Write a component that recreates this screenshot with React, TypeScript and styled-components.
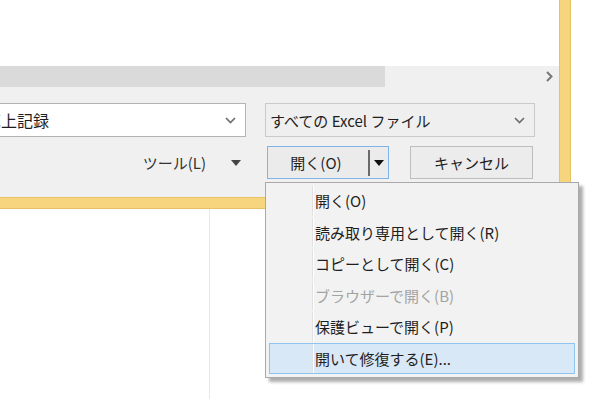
import React from 'react';
import styled, { createGlobalStyle } from 'styled-components';

const GlobalStyle = createGlobalStyle`
    body {
        margin: 0;
        background: #ffffff;
        font-family: "Noto Sans CJK JP", "Noto Sans", sans-serif;
        color: #1e1e1e;
    }
`;

interface ComboProps {
    editable?: boolean;
    width: number;
}

interface MenuItemProps {
    disabled?: boolean;
    active?: boolean;
}

const StyledPage = styled.div`
    position: relative;
    width: 600px;
    height: 400px;
    overflow: hidden;
    background: #ffffff;
`;

const StyledFrameEdge = styled.div`
    width: 571px;
    box-sizing: border-box;
    border-right: 1px solid #e8c266;
    border-bottom: 1px solid #e8c266;
`;

const StyledFrameBand = styled.div`
    border-right: 10px solid #f7d57f;
    border-bottom: 10px solid #f7d57f;
`;

const StyledDialog = styled.div`
    display: flex;
    flex-direction: column;
    height: 197px;
    background: #f0f0f0;
    border-right: 1px solid #e8c266;
    border-bottom: 1px solid #e8c266;
`;

const StyledFileArea = styled.div`
    height: 66px;
    background: #ffffff;
`;

const StyledScrollBar = styled.div`
    display: flex;
    align-items: center;
    height: 21px;
    background: #f0f0f0;
`;

const StyledThumb = styled.div`
    width: 385px;
    height: 100%;
    background: #dadada;
`;

const StyledScrollArrow = styled.svg`
    margin-left: auto;
    margin-right: 6px;
`;

const StyledControls = styled.div`
    display: flex;
    flex-direction: column;
    padding-top: 16px;
    gap: 9px;
`;

const StyledRow = styled.div<{ right: number }>`
    display: flex;
    align-items: center;
    justify-content: flex-end;
    padding-right: ${(p) => p.right}px;
`;

const StyledCombo = styled.div<ComboProps>`
    display: flex;
    align-items: center;
    justify-content: space-between;
    flex-shrink: 0;
    box-sizing: border-box;
    width: ${(p) => p.width}px;
    height: 34px;
    padding: 0 9px 0 4px;
    border: 1px solid ${(p) => (p.editable ? '#b4b4b4' : '#cacaca')};
    background: ${(p) => (p.editable ? '#ffffff' : '#efefef')};
    font-size: 15px;
    line-height: 1;
    white-space: nowrap;
`;

const StyledComboText = styled.span<{ size: number }>`
    font-size: ${(p) => p.size}px;
`;

const StyledTools = styled.div`
    display: flex;
    align-items: center;
    gap: 25px;
    margin-right: 26px;
    font-size: 15px;
    line-height: 1;
    color: #333333;
`;

const StyledSplitButton = styled.div`
    display: flex;
    align-items: center;
    box-sizing: border-box;
    width: 122px;
    height: 33px;
    margin-right: 21px;
    border: 1px solid #7db5e8;
    background: #ebebeb;
    font-size: 15px;
    line-height: 1;
`;

const StyledSplitLabel = styled.span`
    flex: 1;
    text-align: center;
    padding-right: 4px;
`;

const StyledSplitDivider = styled.span`
    width: 2px;
    height: 26px;
    background: #6a6a6a;
`;

const StyledSplitArrow = styled.span`
    display: flex;
    justify-content: center;
    width: 18px;
`;

const StyledButton = styled.div`
    display: flex;
    align-items: center;
    justify-content: center;
    box-sizing: border-box;
    width: 123px;
    height: 33px;
    border: 1px solid #bdbdbd;
    background: #ececec;
    font-size: 15px;
    line-height: 1;
`;

const StyledBelow = styled.div`
    display: flex;
    height: 190px;
`;

const StyledColumn = styled.div`
    width: 209px;
    border-right: 1px solid #e7e7e7;
`;

const StyledMenu = styled.div`
    position: absolute;
    left: 265px;
    top: 182px;
    width: 314px;
    box-sizing: border-box;
    padding: 2px 3px 3px;
    border: 1px solid #a9a9a9;
    background: #f2f2f2;
    box-shadow: 4px 4px 3px rgba(0, 0, 0, 0.32);

    ::before {
        content: '';
        position: absolute;
        left: 42px;
        top: 0;
        bottom: 0;
        width: 1px;
        background: #e1e1e1;
        border-right: 1px solid #ffffff;
    }
`;

const StyledMenuItem = styled.div<MenuItemProps>`
    position: relative;
    display: flex;
    align-items: center;
    box-sizing: border-box;
    height: 31.5px;
    padding-left: 45px;
    border: 1px solid ${(p) => (p.active ? '#8fc3f0' : 'transparent')};
    background: ${(p) => (p.active ? '#d9e8f7' : 'transparent')};
    color: ${(p) => (p.disabled ? '#a3a3a3' : '#1e1e1e')};
    font-size: 15px;
    line-height: 1;
    white-space: nowrap;
`;

const Chevron = () => (
    <svg width="11" height="7" viewBox="0 0 11 7">
        <polyline points="1,1 5.5,5.5 10,1" fill="none" stroke="#6e6e6e" strokeWidth="1.7" />
    </svg>
);

const DownTriangle = ({ color }: { color: string }) => (
    <svg width="10" height="6" viewBox="0 0 10 6">
        <polygon points="0,0 10,0 5,6" fill={color} />
    </svg>
);

const menuItems: { label: string; disabled?: boolean; active?: boolean }[] = [
    { label: '開く(O)' },
    { label: '読み取り専用として開く(R)' },
    { label: 'コピーとして開く(C)' },
    { label: 'ブラウザーで開く(B)', disabled: true },
    { label: '保護ビューで開く(P)' },
    { label: '開いて修復する(E)...', active: true }
];

export default function App() {
    return (
        <StyledPage>
            <GlobalStyle />
            <StyledFrameEdge>
                <StyledFrameBand>
                    <StyledDialog>
                        <StyledFileArea />
                        <StyledScrollBar>
                            <StyledThumb />
                            <StyledScrollArrow width="7" height="11" viewBox="0 0 7 11">
                                <polyline points="1,1 5.5,5.5 1,10" fill="none" stroke="#777777" strokeWidth="2" />
                            </StyledScrollArrow>
                        </StyledScrollBar>
                        <StyledControls>
                            <StyledRow right={24}>
                                <StyledCombo editable width={266} style={{ marginRight: 19 }}>
                                    <StyledComboText size={16}>売上記録</StyledComboText>
                                    <Chevron />
                                </StyledCombo>
                                <StyledCombo width={270}>
                                    <StyledComboText size={15}>すべての Excel ファイル</StyledComboText>
                                    <Chevron />
                                </StyledCombo>
                            </StyledRow>
                            <StyledRow right={26}>
                                <StyledTools>
                                    <span>ツール(L)</span>
                                    <DownTriangle color="#444444" />
                                </StyledTools>
                                <StyledSplitButton>
                                    <StyledSplitLabel>開く(O)</StyledSplitLabel>
                                    <StyledSplitDivider />
                                    <StyledSplitArrow>
                                        <DownTriangle color="#111111" />
                                    </StyledSplitArrow>
                                </StyledSplitButton>
                                <StyledButton>キャンセル</StyledButton>
                            </StyledRow>
                        </StyledControls>
                    </StyledDialog>
                </StyledFrameBand>
            </StyledFrameEdge>
            <StyledBelow>
                <StyledColumn />
            </StyledBelow>
            <StyledMenu>
                {menuItems.map((item) => (
                    <StyledMenuItem key={item.label} disabled={item.disabled} active={item.active}>
                        {item.label}
                    </StyledMenuItem>
                ))}
            </StyledMenu>
        </StyledPage>
    );
}
